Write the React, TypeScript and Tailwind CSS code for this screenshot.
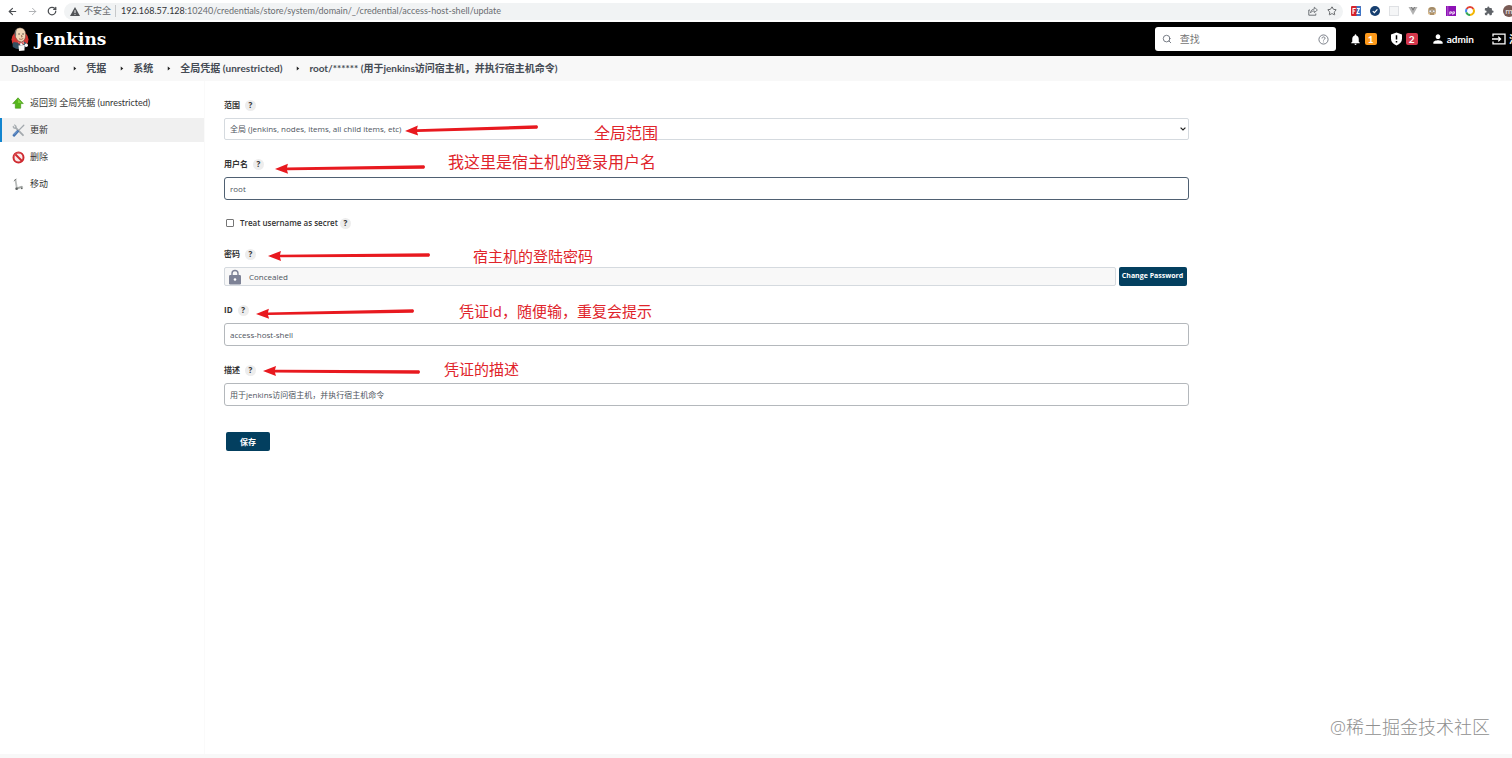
import type { ReactNode } from "react";
import { ArrowLeft, ArrowRight, RotateCw, Search, Star } from "lucide-react";
import { MdNotifications, MdPerson } from "react-icons/md";

type Point = [number, number];

type FieldProps = {
  id: string;
  label: string;
  arrow: { tip: Point; tail: Point };
  note: string;
  noteClass: string;
  children: ReactNode;
};

const crumbs = [
  "Dashboard",
  "凭据",
  "系统",
  "全局凭据 (unrestricted)",
  "root/****** (用于jenkins访问宿主机，并执行宿主机命令)",
];

const inputClass = "h-[23px] w-full rounded-[3px] border bg-white px-[5px] text-[8px] text-[#4d545d] outline-none";

const HelpButton = ({ topic }: { topic: string }) => (
  <button
    type="button"
    aria-label={`Help for feature: ${topic}`}
    className="flex size-[11px] items-center justify-center rounded-full bg-[#ededed] text-[8px] leading-none font-bold text-[#333]"
  >
    ?
  </button>
);

const Arrow = ({ tip, tail }: { tip: Point; tail: Point }) => {
  const length = Math.hypot(tail[0] - tip[0], tail[1] - tip[1]);
  const angle = (Math.atan2(tail[1] - tip[1], tail[0] - tip[0]) * 180) / Math.PI;
  return (
    <svg className="pointer-events-none absolute top-0 left-0 h-10 w-full overflow-visible" aria-hidden="true">
      <g transform={`translate(${tip[0]} ${tip[1]}) rotate(${angle})`} fill="#e8191f">
        <path d={`M0 0 L13 -5 L12 -1.3 L${length - 1} -1.7 Q${length + 1} 0 ${length - 1} 1.7 L12 1.3 L13 5 Z`} />
      </g>
    </svg>
  );
};

const Field = ({ id, label, arrow, note, noteClass, children }: FieldProps) => (
  <div className="relative flex flex-col gap-[5px]">
    <div className="flex h-4 items-center gap-[5px]">
      <label htmlFor={id} className="text-[8px] font-bold text-[#333]">
        {label}
      </label>
      <HelpButton topic={label} />
    </div>
    {children}
    <Arrow tip={arrow.tip} tail={arrow.tail} />
    <span className={`pointer-events-none absolute leading-5 whitespace-nowrap text-[#e0242b] ${noteClass}`}>
      {note}
    </span>
  </div>
);

const HelpCircle = () => (
  <svg viewBox="0 0 12 12" className="size-[11px]" fill="none" stroke="#5f6570">
    <circle cx="6" cy="6" r="5" strokeWidth="0.9" />
    <path d="M4.4 4.8c0-2.2 3.3-2.1 3.3-.1 0 1.1-1.7 1.2-1.7 2.4" strokeWidth="0.9" />
    <circle cx="6" cy="8.7" r="0.3" strokeWidth="0.5" />
  </svg>
);

const Extensions = () => (
  <div className="flex items-center gap-[9px]">
    <svg viewBox="0 0 10 10" className="size-2.5">
      <rect width="10" height="10" rx="1" fill="#d8232a" />
      <path d="M5.5 0H9a1 1 0 0 1 1 1v8a1 1 0 0 1-1 1H5.5z" fill="#3d78c9" />
      <path d="M2 8V2.5h2.7M2 5h2.2M5.8 2.5h2.5L6 7.5h2.7" fill="none" stroke="#fff" strokeWidth="1.1" />
    </svg>
    <svg viewBox="0 0 10 10" className="size-2.5">
      <circle cx="5" cy="5" r="5" fill="#173f70" />
      <path d="M2.8 5.1l1.6 1.6 3-3.3" fill="none" stroke="#fff" strokeWidth="1.2" />
    </svg>
    <svg viewBox="0 0 10 10" className="size-2.5">
      <rect x="0.5" y="0.5" width="9" height="9" fill="#f5f6f7" stroke="#dfe1e4" />
    </svg>
    <svg viewBox="0 0 10 10" className="size-2.5">
      <path d="M0.5 1h2L5 5.5 7.5 1h2L5 9z" fill="#b3b3b3" />
      <path d="M2.5 1h1.7L5 2.5 5.8 1h1.7L5 5.5z" fill="#7d7d7d" />
    </svg>
    <svg viewBox="0 0 10 10" className="size-2.5">
      <path d="M1 4Q1 1 5 1t4 3v3q0 2-4 2T1 7z" fill="#d9b98a" />
      <path d="M1.5 3.5Q2 1 5 1t3.5 2.5z" fill="#a08a6a" />
      <circle cx="3.2" cy="5.2" r="1.3" fill="#fff" stroke="#666" strokeWidth="0.6" />
      <circle cx="6.8" cy="5.2" r="1.3" fill="#fff" stroke="#666" strokeWidth="0.6" />
      <path d="M3 8h4" stroke="#70563b" strokeWidth="0.8" />
    </svg>
    <svg viewBox="0 0 10 10" className="size-2.5">
      <rect width="10" height="10" fill="#8d12b5" />
      <path d="M1.8 0v10" stroke="#c77be0" strokeWidth="0.7" />
      <path d="M3.8 8.5V5.8h1.7v1.4H3.8M6.8 9V5.8h1.7v1.6H6.8" fill="none" stroke="#fff" strokeWidth="0.8" />
    </svg>
    <svg viewBox="0 0 10 10" className="size-2.5" fill="none" strokeWidth="2">
      <path d="M1.6 3A3.9 3.9 0 0 1 8.4 3" stroke="#e34133" />
      <path d="M8.4 3A3.9 3.9 0 0 1 5 8.9" stroke="#f3b605" />
      <path d="M5 8.9A3.9 3.9 0 0 1 1.3 6.2" stroke="#34a853" />
      <path d="M1.3 6.2A3.9 3.9 0 0 1 1.6 3" stroke="#4285f4" />
    </svg>
    <svg viewBox="0 0 24 24" className="size-2.5" fill="#5f6368">
      <path d="M20.5 11H19V7a2 2 0 0 0-2-2h-4V3.5a2.5 2.5 0 0 0-5 0V5H4a2 2 0 0 0-2 2v3.8h1.5a2.7 2.7 0 0 1 0 5.4H2V20a2 2 0 0 0 2 2h3.8v-1.5a2.7 2.7 0 0 1 5.4 0V22H17a2 2 0 0 0 2-2v-4h1.5a2.5 2.5 0 0 0 0-5z" />
    </svg>
    <span className="flex size-3 shrink-0 items-center justify-center rounded-full bg-[#795b55] text-[8px] leading-none text-white">
      m
    </span>
  </div>
);

const BrowserBar = () => (
  <div className="flex h-[22px] items-center overflow-hidden bg-white pl-[7px] text-[#4a4d51]">
    <div className="flex items-center gap-[9px]">
      <ArrowLeft size={11} strokeWidth={2.5} />
      <ArrowRight size={11} strokeWidth={2} className="text-[#a8abae]" />
      <RotateCw size={10} strokeWidth={3} />
    </div>
    <div className="ml-[7px] flex h-[17px] flex-1 items-center rounded-full bg-[#f1f3f4] px-1.5 text-[9px]">
      <svg viewBox="0 0 10 9" className="h-[9px] w-2.5">
        <path d="M5 0l5 9H0z" fill="#505357" />
        <path d="M5 3.2v2.8M5 6.9v1" stroke="#f1f3f4" />
      </svg>
      <span className="ml-1 text-[#66696d]">不安全</span>
      <span className="mr-[5px] ml-1 h-3 w-px bg-[#c6c8ca]" />
      <span className="flex-1 truncate font-['Lato',sans-serif] text-[#6a6d71]">
        <span className="text-[#303236]">192.168.57.128</span>
        :10240/credentials/store/system/domain/_/credential/access-host-shell/update
      </span>
      <svg viewBox="0 0 10 10" className="mr-[9px] size-2.5" fill="none" stroke="#5f6368">
        <path d="M2 4H0.8v5.2h7V7.5" strokeWidth="0.9" />
        <path d="M2.5 6.8C2.8 4.3 4.2 3.2 6.3 3.1V1.2L9.4 4 6.3 6.6V4.9C4.6 4.9 3.4 5.5 2.5 6.8z" strokeWidth="0.8" />
      </svg>
      <Star size={10} />
    </div>
    <div className="-mr-[3px] ml-2">
      <Extensions />
    </div>
  </div>
);

const JenkinsHead = () => (
  <svg viewBox="0 0 18 24" className="h-6 w-[18px]">
    <ellipse cx="9" cy="12.5" rx="8.5" ry="8" fill="#d33833" />
    <path d="M2.5 15Q0.8 17 1.8 20q3 2.3 7 2.3t6.5-2.5Q17 16.5 13 14.5L9 16z" fill="#335061" />
    <path
      d="M4 7.5Q3.3 1.2 9 0.8 14.6 0.8 14.6 7.5q0.3 6-4.2 7.5Q4.8 14 4 7.5z"
      fill="#f0d6b7"
      stroke="#3a2c25"
      strokeWidth="0.4"
    />
    <path d="M3.8 8.5Q3 3.5 6 1.6 4.8 4.5 5.2 8q-0.7 1.5-0.2 3z" fill="#6d6b6d" />
    <path d="M7.3 7h1.5M11.3 7h1.5" stroke="#2b2522" strokeWidth="0.9" />
    <path d="M10.4 8l0.8 1.8h-1.2M8 11.8q2.3 1.3 4.3-0.3" fill="none" stroke="#7a4b36" strokeWidth="0.7" />
    <path d="M6.5 14.5l3.5 1.5 2.6-1.5 0.8 2-3.4 2z" fill="#fff" />
    <path d="M10 16l-2.5-1.2v2.6zM10 16l2.6-1v2.6z" fill="#d33833" />
    <path d="M7.5 18.5l6-0.5v5.5l-5.5 0.4z" fill="#f7f7f7" />
    <circle cx="15.3" cy="18.3" r="1.7" fill="#f7f7f7" />
  </svg>
);

const Header = () => (
  <header className="flex h-[34px] items-center overflow-hidden bg-black pl-[11px] text-white">
    <a href="#" className="flex items-center gap-[6px]">
      <JenkinsHead />
      <span className="font-['DejaVu_Serif',serif] text-[17px] leading-6 font-bold">Jenkins</span>
    </a>
    <div className="ml-auto flex h-6 w-[181px] items-center rounded-[3px] bg-white px-[7px] text-[#5f6570]">
      <Search size={10} />
      <input
        aria-label="查找"
        placeholder="查找"
        className="ml-2 min-w-0 flex-1 bg-transparent text-[10px] outline-none placeholder:text-[#757575]"
      />
      <HelpCircle />
    </div>
    <div className="-mr-[17px] ml-[13px] flex items-center font-['Lato','Noto_Sans_CJK_SC',sans-serif] text-[10px] font-bold whitespace-nowrap">
      <a href="#" aria-label="1" className="flex items-center gap-[3px]">
        <MdNotifications size={13} />
        <span className="flex size-3 items-center justify-center rounded-[2px] bg-[#fe9a1b]">1</span>
      </a>
      <a href="#" aria-label="2" className="ml-[13px] flex items-center gap-[3px]">
        <svg viewBox="0 0 12 14" className="h-[14px] w-[13px]">
          <path d="M6 0.5l5.5 2v4.3c0 3.2-2.2 5.5-5.5 6.7C2.7 12.3 0.5 10 0.5 6.8V2.5z" fill="#fff" />
          <path d="M6 3.2v4.4M6 8.9v1.6" stroke="#000" strokeWidth="1.5" />
        </svg>
        <span className="flex size-3 items-center justify-center rounded-[2px] bg-[#d5374c]">2</span>
      </a>
      <a href="#" className="ml-[13px] flex items-center gap-[2px]">
        <MdPerson size={14} />
        admin
      </a>
      <a href="#" className="ml-[18px] flex items-center gap-[3px]">
        <svg viewBox="0 0 14 12" className="h-3 w-[14px]" fill="none" stroke="#fff" strokeWidth="1.3">
          <path d="M1 3.5V1.2h12v9.6H1V8.5" />
          <path d="M0 6h8.5M6.2 3.6L8.6 6 6.2 8.4" />
        </svg>
        注销
      </a>
    </div>
  </header>
);

const Breadcrumbs = () => (
  <nav className="flex h-[25px] items-center bg-[#f8f8f8] pl-[11px] font-['Lato','Noto_Sans_CJK_SC',sans-serif] text-[10px] font-bold whitespace-nowrap text-[#454b54]">
    {crumbs.map((crumb, index) => (
      <span key={crumb} className="flex items-center">
        {index > 0 && (
          <svg viewBox="0 0 4 6" className="mr-[9px] ml-[14px] h-[5px] w-1">
            <path d="M0.5 0.5L3.5 3 0.5 5.5z" fill="#222" />
          </svg>
        )}
        <a href="#">{crumb}</a>
      </span>
    ))}
  </nav>
);

const UpIcon = () => (
  <svg viewBox="0 0 12 12" className="size-3">
    <path d="M6 0.8L11.3 6.6H8.7v4.6H3.3V6.6H0.7z" fill="#56b61c" stroke="#3f9412" strokeWidth="0.6" />
    <path d="M6 1.8L9.6 6H6z" fill="#7fd33c" />
  </svg>
);

const ToolsIcon = () => (
  <svg viewBox="0 0 13 13" className="size-[13px]" fill="none" strokeLinecap="round">
    <path d="M3.3 3.3l7.7 7.9" stroke="#a3a9ad" strokeWidth="1.8" />
    <path d="M1.3 2.4q0 2.3 2.6 1.9Q4.6 1.8 2.6 1" stroke="#a9afb3" strokeWidth="1.3" />
    <path d="M11.8 1.2L6.5 6.6" stroke="#a2a8ad" strokeWidth="1.3" />
    <path d="M5.6 7.4L2 11.2" stroke="#4474b3" strokeWidth="2.7" />
    <path d="M5 7.5L2 10.5" stroke="#8db2de" strokeWidth="0.8" />
  </svg>
);

const DeleteIcon = () => (
  <svg viewBox="0 0 13 13" className="size-[13px]" fill="none">
    <circle cx="6.5" cy="6.5" r="5" fill="#fbeaea" stroke="#cf2a30" strokeWidth="2" />
    <path d="M3 3l7 7" stroke="#cf2a30" strokeWidth="2" />
    <path d="M2 5.5A4.7 4.7 0 0 1 9 2.3" stroke="#ec7f82" strokeWidth="0.5" />
  </svg>
);

const MoveIcon = () => (
  <svg viewBox="0 0 13 13" className="size-[13px]" fill="none">
    <path d="M3.3 1L4.8 9.8" stroke="#b9bcbb" strokeWidth="1.8" />
    <path d="M2 3.2L4.3 0.8" stroke="#777b79" strokeWidth="1" />
    <path d="M3.5 9.8L10 7.8l1.3 1.4-6.2 2.3z" fill="#a4a8a5" />
    <circle cx="4.6" cy="10.8" r="1.3" fill="#5d6160" />
    <circle cx="9.8" cy="10.3" r="0.9" fill="#5d6160" />
  </svg>
);

const tasks = [
  { label: "返回到 全局凭据 (unrestricted)", icon: <UpIcon /> },
  { label: "更新", icon: <ToolsIcon />, active: true },
  { label: "删除", icon: <DeleteIcon /> },
  { label: "移动", icon: <MoveIcon /> },
];

const SidePanel = () => (
  <aside className="flex w-[205px] shrink-0 flex-col gap-[3px] border-r border-[#fafafa] pt-2.5">
    {tasks.map((task) => (
      <a
        key={task.label}
        href="#"
        className={`flex h-6 items-center border-l-2 pl-2.5 font-['Lato','Noto_Sans_CJK_SC',sans-serif] text-[9px] text-[#333] ${
          task.active ? "border-[#1285cf] bg-[#f0f0f0]" : "border-transparent"
        }`}
      >
        <span className="flex w-[18px] items-center">{task.icon}</span>
        {task.label}
      </a>
    ))}
  </aside>
);

const CredentialForm = () => (
  <form className="flex w-3/4 flex-col gap-4" onSubmit={(event) => event.preventDefault()}>
    <Field
      id="scope"
      label="范围"
      arrow={{ tip: [181, 34], tail: [314, 30] }}
      note="全局范围"
      noteClass="left-[370px] top-[26px] text-[16px]"
    >
      <div className="relative">
        <select
          id="scope"
          className="block h-[22px] w-full appearance-none rounded-[2px] border border-[#d5dadf] bg-white px-[5px] text-[8px] text-[#4d545d] outline-none"
        >
          <option>全局 (Jenkins, nodes, items, all child items, etc)</option>
          <option>系统 (Jenkins and nodes only)</option>
        </select>
        <svg viewBox="0 0 6 4" className="pointer-events-none absolute top-[9px] right-[3px] h-1 w-1.5">
          <path d="M0.6 0.6L3 3 5.4 0.6" fill="none" stroke="#222" strokeWidth="1.2" />
        </svg>
      </div>
    </Field>

    <Field
      id="username"
      label="用户名"
      arrow={{ tip: [51, 13], tail: [201, 11] }}
      note="我这里是宿主机的登录用户名"
      noteClass="left-[224px] -top-1 text-[16px]"
    >
      <input id="username" defaultValue="root" className={`${inputClass} border-[#4f6072]`} />
    </Field>

    <div className="flex h-[14px] items-center pl-0.5">
      <input
        id="secret"
        type="checkbox"
        className="size-2 appearance-none rounded-[1px] border border-[#767676] bg-white checked:bg-[#033f5f]"
      />
      <label htmlFor="secret" className="mr-0.5 ml-1.5 text-[8px] font-semibold text-[#333]">
        Treat username as secret
      </label>
      <HelpButton topic="Treat username as secret" />
    </div>

    <Field
      id="password"
      label="密码"
      arrow={{ tip: [44, 10], tail: [206, 9] }}
      note="宿主机的登陆密码"
      noteClass="left-[249px] top-0 text-[15px]"
    >
      <div className="flex gap-[3px] pr-0.5">
        <div className="flex h-[19px] flex-1 items-center rounded-[2px] border border-[#d5dadf] bg-[#f8f8f8] pl-1">
          <svg viewBox="0 0 12 16" className="h-4 w-3">
            <path d="M3 7V4.5a3 3 0 0 1 6 0V7" fill="none" stroke="#7d8296" strokeWidth="1.4" />
            <rect y="6" width="12" height="9.5" rx="1.2" fill="#7d8296" />
            <circle cx="6" cy="10.5" r="1.3" fill="#fff" />
          </svg>
          <span className="ml-2 text-[8px] text-[#4d545d]">Concealed</span>
        </div>
        <button
          id="password"
          type="button"
          className="h-[19px] w-[68px] rounded-[2px] bg-[#033f5f] text-[7px] font-bold whitespace-nowrap text-white"
        >
          Change Password
        </button>
      </div>
    </Field>

    <Field
      id="credential-id"
      label="ID"
      arrow={{ tip: [32, 12], tail: [190, 9] }}
      note="凭证id，随便输，重复会提示"
      noteClass="left-[235px] -top-px text-[15px]"
    >
      <input id="credential-id" defaultValue="access-host-shell" className={`${inputClass} border-[#b4b8bc]`} />
    </Field>

    <Field
      id="description"
      label="描述"
      arrow={{ tip: [39, 9], tail: [196, 10] }}
      note="凭证的描述"
      noteClass="left-[220px] -top-[3px] text-[15px]"
    >
      <input
        id="description"
        defaultValue="用于jenkins访问宿主机，并执行宿主机命令"
        className={`${inputClass} border-[#b4b8bc]`}
      />
    </Field>

    <button
      type="submit"
      className="mt-2.5 ml-0.5 h-[19px] w-11 rounded-[2px] bg-[#033f5f] text-[8px] font-bold text-white"
    >
      保存
    </button>
  </form>
);

export default function App() {
  return (
    <div className="relative flex min-h-screen flex-col bg-white font-['Open_Sans','Noto_Sans_CJK_SC',sans-serif]">
      <BrowserBar />
      <Header />
      <Breadcrumbs />
      <div className="flex flex-1">
        <SidePanel />
        <main className="flex-1 pt-4 pr-0.5 pl-[19px]">
          <CredentialForm />
        </main>
      </div>
      <footer className="h-1 bg-[#f8f8f8]" />
      <span className="absolute right-[22px] bottom-[19px] text-[18px] leading-6 font-light text-[#8f8f8f]">
        @稀土掘金技术社区
      </span>
    </div>
  );
}
